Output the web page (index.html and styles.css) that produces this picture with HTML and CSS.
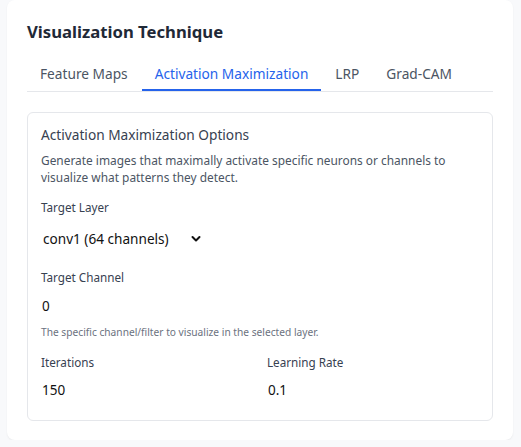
FILE: index.html
```html
<!DOCTYPE html>
<html lang="en">
<head>
<meta charset="utf-8">
<title>Visualization Technique</title>
<link rel="stylesheet" href="styles.css">
</head>
<body>
<div class="card">
  <h2 class="title">Visualization Technique</h2>
  <div class="tabs">
    <button class="tab">Feature Maps</button>
    <button class="tab active">Activation Maximization</button>
    <button class="tab">LRP</button>
    <button class="tab">Grad-CAM</button>
  </div>
  <div class="panel">
    <h3 class="panel-title">Activation Maximization Options</h3>
    <p class="desc">Generate images that maximally activate specific neurons or channels to visualize what patterns they detect.</p>
    <div class="field">
      <label class="label">Target Layer</label>
      <div class="select">
        <span class="select-value">conv1 (64 channels)</span>
        <svg class="chev" width="10" height="8" viewBox="0 0 10 8"><path d="M1.5 2 L5 5.5 L8.5 2" fill="none" stroke="#111" stroke-width="2" stroke-linecap="round" stroke-linejoin="round"/></svg>
      </div>
    </div>
    <div class="field">
      <label class="label">Target Channel</label>
      <input class="input" type="text" value="0">
      <p class="help">The specific channel/filter to visualize in the selected layer.</p>
    </div>
    <div class="row">
      <div class="field">
        <label class="label">Iterations</label>
        <input class="input" type="text" value="150">
      </div>
      <div class="field">
        <label class="label">Learning Rate</label>
        <input class="input" type="text" value="0.1">
      </div>
    </div>
  </div>
</div>
</body>
</html>
```
FILE: styles.css
```css
* { box-sizing: border-box; }
html, body { margin: 0; padding: 0; }
body {
  background: #f8f9fb;
  font-family: "Noto Sans", "Open Sans", sans-serif;
  color: #1f2937;
}
.card {
  margin: 0 8px 0 7px;
  width: 506px;
  background: #fff;
  border-radius: 8px;
  box-shadow: 0 1px 2px rgba(0,0,0,0.06);
  padding: 20px 20px 19px 20px;
}
.title {
  margin: 0;
  font-size: 16.7px;
  line-height: 24px;
  font-weight: 700;
  color: #1f2937;
}
.tabs {
  margin-top: 12px;
  display: flex;
  border-bottom: 1px solid #e5e7eb;
}
.tab {
  font-family: inherit;
  background: none;
  border: none;
  border-bottom: 2px solid transparent;
  padding: 8px 13px 5px;
  font-size: 13.7px;
  line-height: 20px;
  color: #4b5563;
  cursor: pointer;
}
.tab + .tab { margin-left: 1px; }
.tab.active {
  color: #2563eb;
  border-bottom-color: #2563eb;
}
.panel {
  margin-top: 20px;
  border: 1px solid #e5e7eb;
  border-radius: 6px;
  padding: 12px 13px 15px;
}
.panel-title {
  margin: 0;
  font-size: 13.7px;
  line-height: 20px;
  font-weight: 400;
  color: #374151;
}
.desc {
  margin: 7px 0 0;
  font-size: 11.9px;
  line-height: 17px;
  color: #4b5563;
}
.field { display: flex; flex-direction: column; }
.panel > .field { margin-top: 12px; }
.label {
  font-size: 11.7px;
  line-height: 18px;
  color: #374151;
}
.select {
  margin-top: 5px;
  height: 35px;
  display: flex;
  align-items: center;
  padding-left: 2px;
}
.select-value {
  font-size: 13.6px;
  color: #111;
  width: 148px;
}
.chev { display: block; }
.input {
  margin-top: 5px;
  height: 30px;
  border: none;
  background: transparent;
  padding: 0 0 0 1px;
  font-family: inherit;
  font-size: 13.5px;
  color: #111;
  outline: none;
  width: 100%;
}
.help {
  margin: 4px 0 0;
  font-size: 10.2px;
  line-height: 14px;
  color: #6b7280;
}
.row {
  margin-top: 14px;
  display: grid;
  grid-template-columns: 1fr 1fr;
  gap: 14px;
}
.row .input { margin-top: 4px; }
```
